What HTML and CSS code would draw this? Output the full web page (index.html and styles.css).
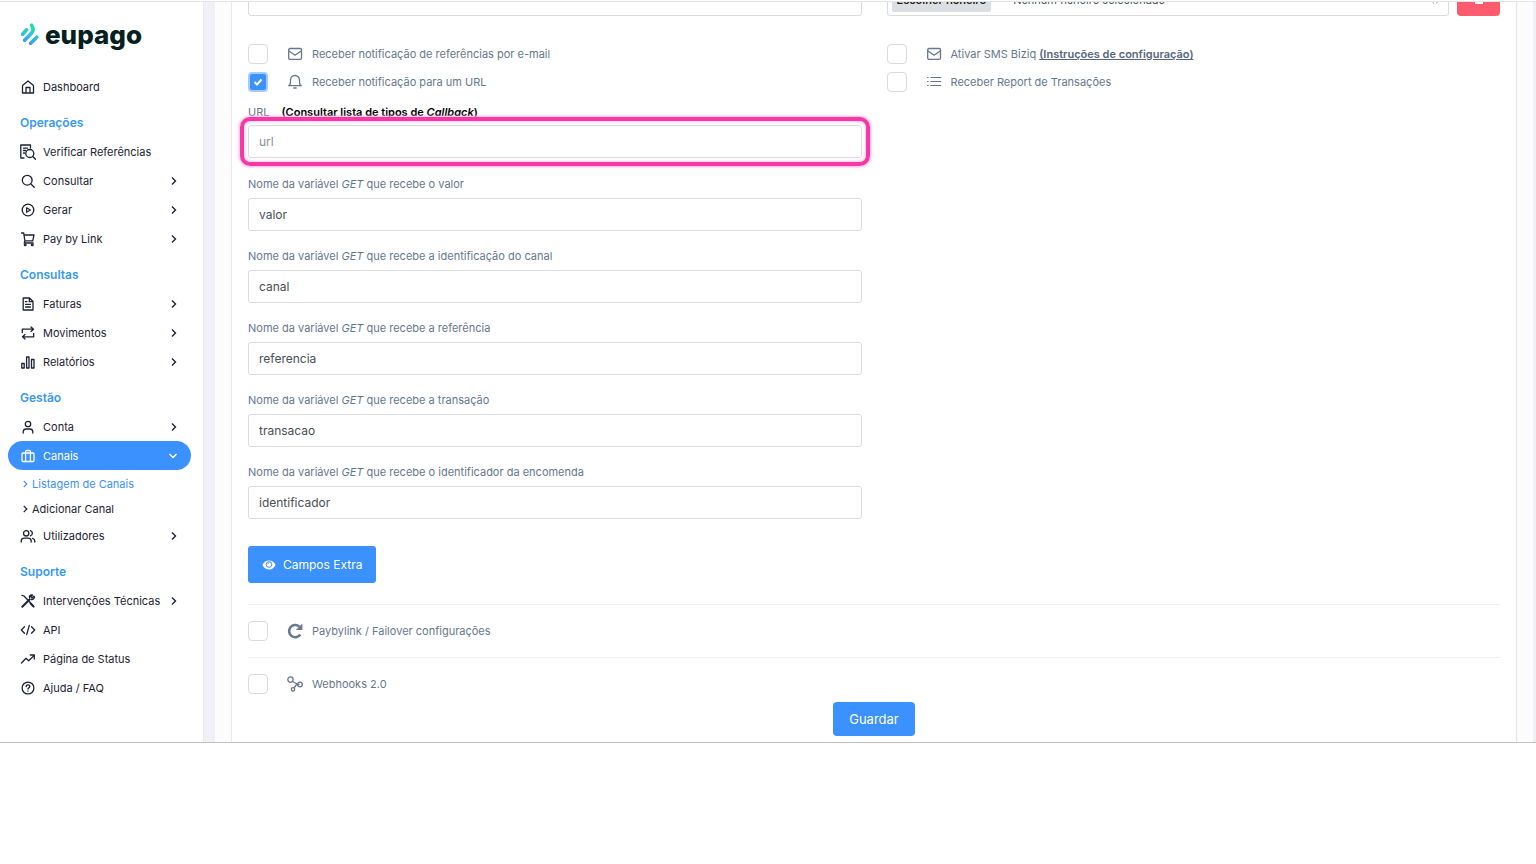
FILE: index.html
```html
<!DOCTYPE html>
<html lang="pt">
<head>
<meta charset="utf-8">
<title>eupago – Canais</title>
<link rel="stylesheet" href="styles.css">
</head>
<body>
<svg class="sprite" aria-hidden="true">
  <symbol id="chev" viewBox="0 0 8 10"><path d="M2 1.500 5.500 5 2 8.500"/></symbol>
  <symbol id="mail" viewBox="0 0 16 16"><rect x="1.700" y="2.500" width="12.800" height="10.800" rx="1.200"/><path d="m2 5 6 4.200L14.200 5"/></symbol>
</svg>
<div class="app">
  <aside class="sidebar">
    <a class="logo" href="#" aria-label="eupago">
      <svg width="20" height="26" viewBox="0 0 20 26">
        <defs><linearGradient id="lg" gradientUnits="userSpaceOnUse" x1="5" y1="24" x2="12" y2="2"><stop offset=".1" stop-color="#3f8cff"/><stop offset=".5" stop-color="#2bc4e0"/><stop offset="1" stop-color="#17e6a0"/></linearGradient></defs>
        <g fill="none" stroke="url(#lg)" stroke-width="3.600" stroke-linecap="round">
          <path d="M2.600 12.200 6.600 7.800"/><path d="M4.600 18.200 11.200 11.500C13.600 9 13.400 6 11.600 3.200"/><path d="M10.600 21.200 16.800 15.200"/>
        </g>
      </svg>
      <span>eupago</span>
    </a>
    <nav class="nav">
      <a class="item" href="#"><svg class="ic" viewBox="0 0 16 16"><path d="M2.500 6.500 8 2l5.500 4.500V14h-11zM6 14V8.500h4V14"/></svg><span>Dashboard</span></a>
      <h2>Operações</h2>
      <a class="item" href="#"><svg class="ic" viewBox="0 0 16 16"><path d="M4 14H.8V1h9.700v3M3.500 4.200h4M3.500 6.500h2M3.500 9h1"/><circle cx="9.800" cy="9.500" r="4"/><path d="m12.700 12.500 2.800 2.800"/></svg><span>Verificar Referências</span></a>
      <a class="item" href="#"><svg class="ic" viewBox="0 0 16 16"><circle cx="7.200" cy="7.200" r="4.900"/><path d="m11 11 3.200 3.200"/></svg><span>Consultar</span><svg class="chev"><use href="#chev"/></svg></a>
      <a class="item" href="#"><svg class="ic" viewBox="0 0 16 16"><circle cx="8" cy="8" r="5.800"/><path d="m6.600 5.800 3.800 2.200-3.800 2.200z"/></svg><span>Gerar</span><svg class="chev"><use href="#chev"/></svg></a>
      <a class="item" href="#"><svg class="ic" viewBox="0 0 16 16"><path d="M1.500 2h2.200l1.200 7.800h7.800L14 4H4M4.900 9.800l-.7 2.200h9"/><circle cx="5.200" cy="13.700" r=".9"/><circle cx="12.300" cy="13.700" r=".9"/></svg><span>Pay by Link</span><svg class="chev"><use href="#chev"/></svg></a>
      <h2>Consultas</h2>
      <a class="item" href="#"><svg class="ic" viewBox="0 0 16 16"><path d="M3.200 2h6.300L13 5.500V14H3.200zM9.300 2v3.700H13M5.500 8.300h5M5.500 11h5M5.500 5.600h1.500"/></svg><span>Faturas</span><svg class="chev"><use href="#chev"/></svg></a>
      <a class="item" href="#"><svg class="ic" viewBox="0 0 16 16"><path d="M2.300 7.500V4.200H13M11 2l2.500 2.200L11 6.400M13.700 8.500v3.300H3M5 9.600l-2.500 2.200L5 14"/></svg><span>Movimentos</span><svg class="chev"><use href="#chev"/></svg></a>
      <a class="item" href="#"><svg class="ic" viewBox="0 0 16 16"><path d="M1.800 9.500h2.400V14H1.800zM6.600 3H9v11H6.600zM11.500 5.500H14V14h-2.500z"/></svg><span>Relatórios</span><svg class="chev"><use href="#chev"/></svg></a>
      <h2>Gestão</h2>
      <a class="item" href="#"><svg class="ic" viewBox="0 0 16 16"><circle cx="8" cy="5" r="2.700"/><path d="M3.200 14v-1.200a3 3 0 0 1 3-2.800h3.600a3 3 0 0 1 3 2.800V14"/></svg><span>Conta</span><svg class="chev"><use href="#chev"/></svg></a>
      <a class="item active" href="#"><svg class="ic" viewBox="0 0 16 16"><rect x="2" y="5" width="12" height="8.500" rx="1"/><path d="M5.600 13.500V3.800q0-1.300 1.200-1.300h2.400q1.200 0 1.200 1.300v9.700"/></svg><span>Canais</span><svg class="chev down" viewBox="0 0 10 8"><path d="m1.500 2 3.500 3.500L8.500 2"/></svg></a>
      <div class="sub">
        <a class="current" href="#"><svg class="chev"><use href="#chev"/></svg>Listagem de Canais</a>
        <a href="#"><svg class="chev"><use href="#chev"/></svg>Adicionar Canal</a>
      </div>
      <a class="item" href="#"><svg class="ic" viewBox="0 0 16 16"><circle cx="6.200" cy="5.300" r="2.700"/><path d="M1.200 14v-1.200a3 3 0 0 1 3-2.600h4a3 3 0 0 1 3 2.600V14M10.400 2.700a2.700 2.700 0 0 1 0 5.200M12.500 10.400q2.300.7 2.300 2.700v.9"/></svg><span>Utilizadores</span><svg class="chev"><use href="#chev"/></svg></a>
      <h2>Suporte</h2>
      <a class="item" href="#"><svg class="ic" viewBox="0 0 16 16"><path d="m2 2.300 2 .7 9 9.500" /><path class="thick" d="m10.600 10.600 3 3M2.300 13.700l7-7"/><path d="M13.800 3.200 12 5l-1.200-1.200L12.500 2C10 1.300 8.800 3.600 9.600 5.200M10.800 6.400c2 .8 4-.7 3.500-2.900"/></svg><span>Intervenções Técnicas</span><svg class="chev"><use href="#chev"/></svg></a>
      <a class="item" href="#"><svg class="ic" viewBox="0 0 16 16"><path d="M4.500 4.800 1.300 8l3.200 3.200M11.500 4.800 14.700 8l-3.200 3.200M9.300 3.300 6.700 12.700"/></svg><span>API</span></a>
      <a class="item" href="#"><svg class="ic" viewBox="0 0 16 16"><path d="M1.500 12 6 7.300l2.700 2.500L14 4.600M10.300 4h4v4"/></svg><span>Página de Status</span></a>
      <a class="item" href="#"><svg class="ic" viewBox="0 0 16 16"><circle cx="8" cy="8" r="5.900"/><path d="M6.200 6.700c0-2.500 3.700-2.200 3.600-.2 0 1.200-1.800 1.300-1.800 2.500M8 10.800v.3"/></svg><span>Ajuda / FAQ</span></a>
    </nav>
  </aside>
  <main class="main">
    <form class="panel">
      <div class="cols cut">
        <input class="box" type="text" aria-label="Nome">
        <div class="filerow">
          <label class="box file"><input type="file"><span class="pick">Escolher ficheiro</span><span>Nenhum ficheiro selecionado</span><svg class="clip" width="8" height="10" viewBox="0 0 8 10"><path d="M1 0v5q0 2.500 2 3.500M7 0v5q0 2.500-2 3.500"/></svg></label>
          <button class="trash" type="button" aria-label="Remover"><svg width="8" height="10" viewBox="0 0 8 10"><path d="M0 0h8v10H0z"/></svg></button>
        </div>
      </div>
      <div class="cols opts">
        <div>
          <label class="check"><input type="checkbox"><svg class="ic"><use href="#mail"/></svg><span>Receber notificação de referências por e-mail</span></label>
          <label class="check"><input type="checkbox" checked><svg class="ic" viewBox="0 0 16 16"><path d="M1.700 11.700q1.800-1.200 1.800-3.500V6a4.500 4.500 0 0 1 9 0v2.200q0 2.300 1.800 3.500zM6.800 14h2.400"/></svg><span>Receber notificação para um URL</span></label>
          <div class="field first">
            <p class="caption"><label for="url">URL</label><a href="#">(Consultar lista de tipos de <em>Callback</em>)</a></p>
            <div class="marked"><input class="box" id="url" type="text" placeholder="url"></div>
          </div>
          <div class="field"><label for="f1">Nome da variável <em>GET</em> que recebe o valor</label><input class="box" id="f1" type="text" value="valor"></div>
          <div class="field"><label for="f2">Nome da variável <em>GET</em> que recebe a identificação do canal</label><input class="box" id="f2" type="text" value="canal"></div>
          <div class="field"><label for="f3">Nome da variável <em>GET</em> que recebe a referência</label><input class="box" id="f3" type="text" value="referencia"></div>
          <div class="field"><label for="f4">Nome da variável <em>GET</em> que recebe a transação</label><input class="box" id="f4" type="text" value="transacao"></div>
          <div class="field"><label for="f5">Nome da variável <em>GET</em> que recebe o identificador da encomenda</label><input class="box" id="f5" type="text" value="identificador"></div>
          <button class="btn extra" type="button"><svg width="14" height="10" viewBox="0 0 14 10"><path fill="#fff" d="M7 .5C10 .5 12.500 2.500 13.600 5 12.500 7.500 10 9.500 7 9.500S1.500 7.500.4 5C1.500 2.500 4 .5 7 .5z"/><circle cx="7" cy="4.500" r="2.800" fill="#fff" stroke="#3b91fe" stroke-width="1"/><path d="M5.600 4.300q.1-1.300 1.400-1.400" stroke="#3b91fe" fill="none" stroke-width=".8"/></svg>Campos Extra</button>
        </div>
        <div>
          <div class="check"><input type="checkbox" id="sms"><svg class="ic"><use href="#mail"/></svg><span><label for="sms">Ativar SMS Biziq </label><a href="#">(Instruções de configuração)</a></span></div>
          <label class="check"><input type="checkbox"><svg class="ic thin" viewBox="0 0 16 16"><path d="M4.800 3.500h10M4.800 7.500h10M4.800 11.500h10M1.500 3.500h.8M1.500 7.500h.8M1.500 11.500h.8"/></svg><span>Receber Report de Transações</span></label>
        </div>
      </div>
      <div class="section"><label class="check"><input type="checkbox"><svg class="ic" viewBox="0 0 16 16"><path class="bold" d="M13.300 11.500A6.100 6.100 0 1 1 12.300 3.600"/><path class="solid" d="M15.300.6v6.400H8.900z"/></svg><span>Paybylink / Failover configurações</span></label></div>
      <div class="section"><label class="check"><input type="checkbox"><svg class="ic" viewBox="0 0 16 16"><circle cx="3.500" cy="3.600" r="2.700"/><circle cx="13" cy="8.500" r="2.300"/><circle cx="6" cy="13.300" r="1.700"/><path d="m5.500 5.500 5.200 2.800M12 8.500H9.500L7 12"/></svg><span>Webhooks 2.0</span></label></div>
      <button class="btn save" type="submit">Guardar</button>
    </form>
  </main>
</div>
</body>
</html>
```
FILE: styles.css
```css
* { box-sizing: border-box; }
body { margin: 0; background: #fff; font-family: Inter, "Liberation Sans", sans-serif; font-size: 11px; color: #1d2334; }
a { color: inherit; text-decoration: none; }
input, button { font: inherit; }
.sprite { position: absolute; width: 0; height: 0; }
.app { display: flex; margin-top: 1px; border-top: 1px solid #e3e4e6; border-bottom: 1px solid #bfc1c6; }

.sidebar { flex: 0 0 204px; padding: 19px 12px 0 8px; border-right: 1px solid #ebecf0; }
.logo { display: flex; align-items: center; gap: 5px; height: 28px; margin: 0 0 23px 12px; color: #04201f; }
.logo span { font-size: 26px; font-weight: 800; line-height: 28px; }
.ic { flex: none; width: 16px; height: 16px; fill: none; stroke: currentColor; stroke-width: 1.3; stroke-linejoin: round; stroke-linecap: round; }
.ic.thin { stroke-width: 1; }
.ic .thick { stroke-width: 2; }
.ic .bold { stroke-width: 2.6; stroke-linecap: butt; }
.ic .solid { fill: currentColor; stroke: none; }
.chev { flex: none; width: 8px; height: 10px; fill: none; stroke: currentColor; stroke-width: 1.4; }
.chev.down { width: 10px; height: 8px; }
.item { display: flex; align-items: center; height: 29px; padding: 0 13px 0 12px; gap: 7px; border-radius: 15px; white-space: nowrap; }
.item .chev { margin-left: auto; }
.item.active { background: #3b91fe; color: #fff; }
.nav h2 { margin: 12px 0 4px 12px; font-size: 12px; line-height: 20px; font-weight: 600; color: #3699f5; }
.sub { padding: 1px 0 0 14px; }
.sub a { display: flex; align-items: center; gap: 3px; height: 25px; }
.sub .chev { width: 7px; }
.sub .current { color: #3b91fe; }

.main { flex: 1; min-width: 0; padding: 0 3px 0 11px; background: #f0f1f7; }
.panel { height: 100%; margin: 0; padding: 0 17px 6px; background: #fff; border: solid #fcfcfd; border-width: 0 16px; box-shadow: inset 1px 0 #e8e9eb, inset -1px 0 #e4e5e8; color: #66788f; }
.cols { display: grid; grid-template-columns: 1fr 1fr; gap: 25px; }
.cut { height: 14px; overflow: hidden; align-content: end; align-items: end; }
.box { display: block; width: 100%; height: 33px; padding: 0 10px; border: 1px solid #d9dcdf; border-radius: 3px; background: #fff; color: #495057; font-size: 12px; outline: 0; }
.box::placeholder { color: #868e96; opacity: 1; }
.filerow { display: flex; gap: 8px; align-items: end; }
.file { display: flex; align-items: center; flex: 1; padding: 0 9px 0 4px; font-size: 11px; }
.file input { position: absolute; opacity: 0; width: 1px; height: 1px; }
.pick { padding: 5px; margin-right: 22px; border-radius: 2px; background: #dcdfe2; color: #222; font-weight: 600; }
.clip { margin: 0 0 0 auto; fill: none; stroke: #8a97a8; }
.trash { display: flex; align-items: center; justify-content: center; width: 43px; height: 34px; border: 0; border-radius: 4px; background: #ff5b6e; padding: 0; }
.trash svg { fill: #fff; }

.opts { padding-top: 24px; }
.check { display: flex; align-items: center; height: 28px; }
.check input { appearance: none; flex: none; width: 20px; height: 20px; margin: 0 19px 0 0; border: 1px solid #d8dadd; border-radius: 4px; background: #fff; }
.check input:checked { border: 2px solid #a5cbfb; background: #3b91fe url("data:image/svg+xml,%3Csvg xmlns='http://www.w3.org/2000/svg' viewBox='0 0 16 16'%3E%3Cpath d='m4.500 8 2.500 2.500 4.500-5' fill='none' stroke='white' stroke-width='2'/%3E%3C/svg%3E") center / 16px no-repeat; }
.check span { margin-left: 9px; }
.check a { font-weight: 600; text-decoration: underline; color: #56687f; }
.field { margin-bottom: 17px; }
.field > label, .caption { display: block; margin: 0 0 6px; line-height: 16px; }
.first { margin-top: 8px; margin-bottom: 18px; }
.caption { display: flex; gap: 12px; margin-bottom: 5px; }
.caption a { color: #000; font-weight: 600; }
.marked { position: relative; }
.marked::after { content: ""; position: absolute; inset: -8px; border: 4px solid #f737a5; border-radius: 10px; box-shadow: 0 0 3px 1px #fbb2dc, inset 0 0 3px 1px #fbc8e6; pointer-events: none; }
.btn { display: flex; align-items: center; justify-content: center; border: 0; border-radius: 3px; background: #3b91fe; color: #fff; }
.extra { gap: 7px; height: 37px; margin: 27px 0 21px; padding: 0 14px; font-size: 12px; }
.section { border-top: 1px solid #eeeff1; padding: 12px 0; }
.section:last-of-type { padding-bottom: 4px; }
.save { height: 34px; margin: 0 auto; padding: 0 16px; border-radius: 4px; font-size: 13px; }
```
